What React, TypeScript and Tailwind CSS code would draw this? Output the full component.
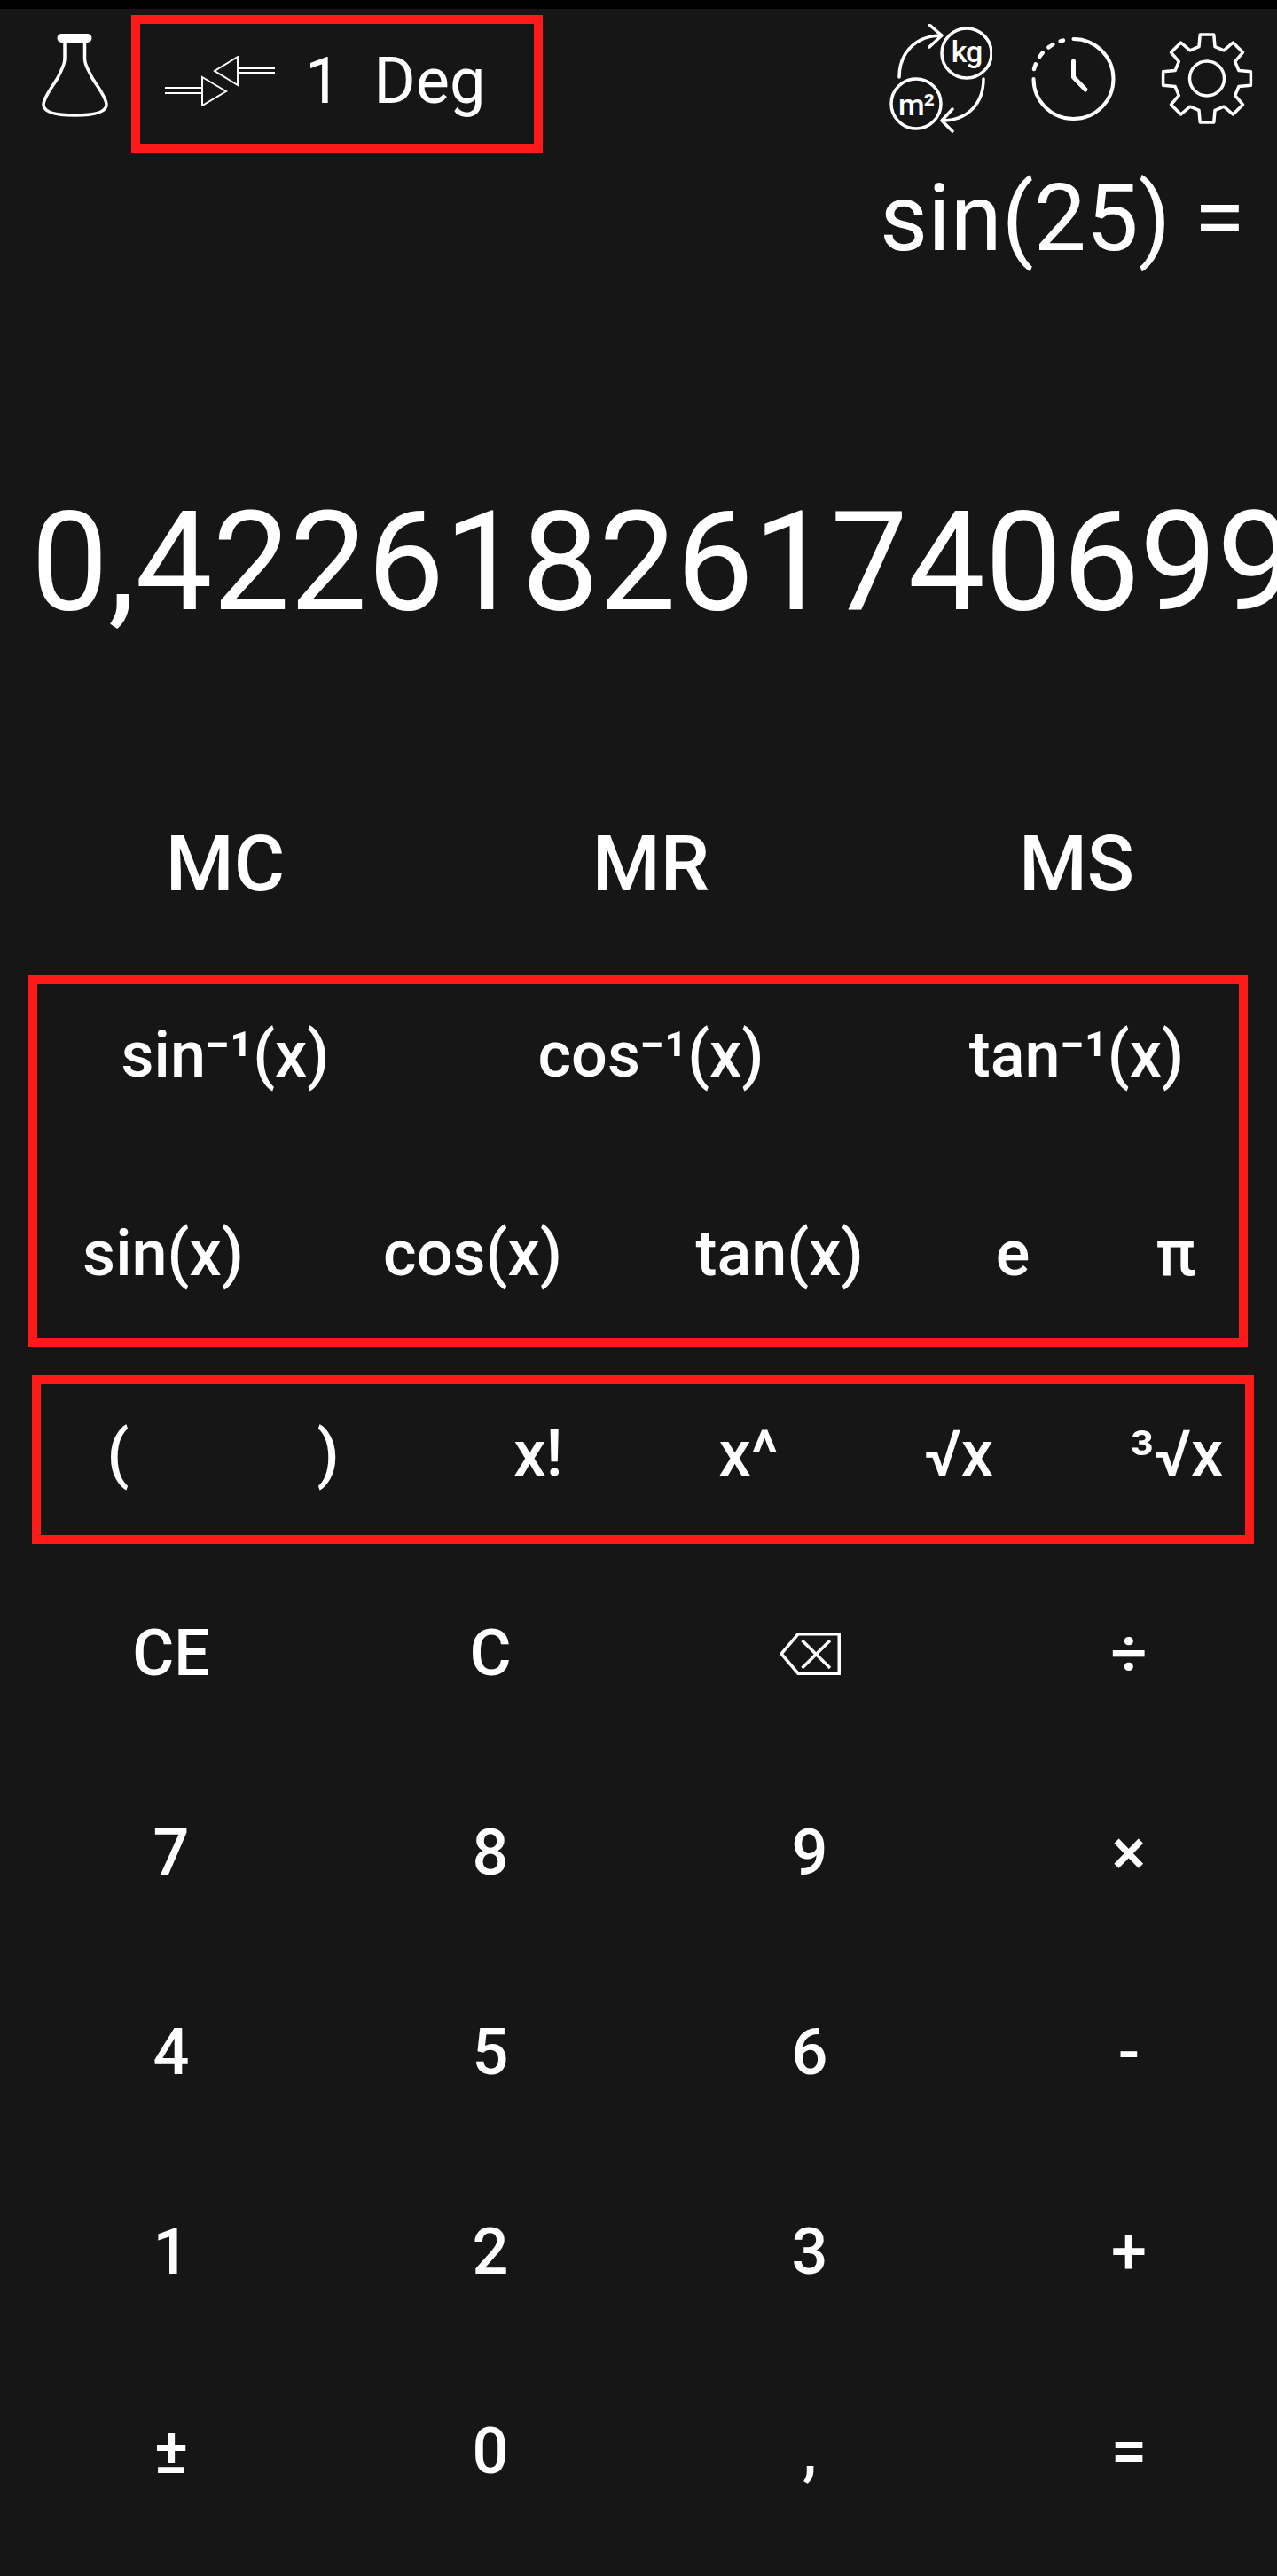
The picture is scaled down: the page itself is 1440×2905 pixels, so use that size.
const ROBOTO = "font-['Roboto',sans-serif]";

function gearPath() {
  const cx = 52;
  const cy = 51.5;
  const pts: string[] = [];
  for (let i = 0; i < 8; i++) {
    const a = (i * 45 - 90) * (Math.PI / 180);
    const offsets: [number, number][] = [
      [37, -14],
      [50, -9],
      [50, 9],
      [37, 14],
    ];
    for (const [r, d] of offsets) {
      const t = a + (d * Math.PI) / 180;
      pts.push(`${(cx + r * Math.cos(t)).toFixed(1)} ${(cy + r * Math.sin(t)).toFixed(1)}`);
    }
  }
  return `M${pts.join(" L")} Z`;
}

function FlaskIcon() {
  return (
    <svg width="75" height="94" viewBox="0 0 75 94" fill="none" stroke="white" strokeWidth="3.5" strokeLinejoin="round">
      <rect x="20" y="2.5" width="34" height="5" rx="2.5" strokeWidth="5" />
      <path d="M26 9 V28 C26 36 22 41 18 50 C12 60 2 72 2 80 C2 90 20 92 37.5 92 C55 92 73 90 73 80 C73 72 63 60 57 50 C53 41 48.5 36 48.5 28 V9" />
    </svg>
  );
}

function ConvertArrows() {
  return (
    <svg width="124" height="57" viewBox="0 0 124 57" fill="none" stroke="white" strokeWidth="2">
      <path d="M0 36 H42 M0 42 H42 M42 24 L69 40 L42 56 Z" />
      <path d="M124 14 H82 M124 19 H82 M82 1 L56 17 L82 33 Z" />
    </svg>
  );
}

function UnitsIcon() {
  return (
    <svg width="116" height="123" viewBox="0 0 116 123" fill="none" stroke="white" strokeWidth="3.5" strokeLinecap="round" strokeLinejoin="round">
      <ellipse cx="87" cy="33" rx="28" ry="28" />
      <ellipse cx="30" cy="90" rx="28" ry="28" />
      <path d="M11 60 C11 32 30 13 59 13 M45 1 L59 13 L45 26" />
      <path d="M106 62 C106 90 88 109 59 109 M71 96 L59 109 L71 121" />
      <text x="87" y="43" textAnchor="middle" fill="white" stroke="none" fontSize="34" fontWeight="500" letterSpacing="-1" fontFamily="Roboto, sans-serif">kg</text>
      <text x="30" y="103" textAnchor="middle" fill="white" stroke="none" fontSize="34" fontWeight="500" letterSpacing="-1" fontFamily="Roboto, sans-serif">m²</text>
    </svg>
  );
}

function ClockIcon() {
  return (
    <svg width="95" height="94" viewBox="0 0 95 94" fill="none" stroke="white" strokeWidth="4" strokeLinecap="round" strokeLinejoin="round">
      <path d="M47.5 2 A45 45 0 1 1 2.5 47" />
      <path d="M3 36 A45 45 0 0 1 36 3.5" strokeDasharray="6 9" strokeWidth="4.5" />
      <path d="M47.5 27 V45 L61 59" strokeWidth="5" />
    </svg>
  );
}

function GearIcon() {
  return (
    <svg width="104" height="103" viewBox="0 0 104 103" fill="none" stroke="white" strokeWidth="3.5" strokeLinejoin="round">
      <path d={gearPath()} />
      <circle cx="52" cy="51.5" r="19.5" />
    </svg>
  );
}

function BackspaceIcon() {
  return (
    <svg width="69" height="48" viewBox="0 0 69 48" fill="none" stroke="white" strokeWidth="3.5">
      <path d="M21 1.75 H67.25 V46.25 H21 L2 24 Z" />
      <path d="M25.5 9 L57 40 M57 9 L25.5 40" />
    </svg>
  );
}

function Key({ children }: { children: React.ReactNode }) {
  return <div className="flex items-center justify-center whitespace-nowrap">{children}</div>;
}

const MEMORY = ["MC", "MR", "MS"];
const INVERSE = ["sin⁻¹(x)", "cos⁻¹(x)", "tan⁻¹(x)"];
const TRIG = ["sin(x)", "cos(x)", "tan(x)", "e", "π"];
const POWERS = ["(", ")", "x!", "x^", "√x", "³√x"];
const KEYPAD: React.ReactNode[] = [
  "CE", "C", <BackspaceIcon key="back" />, "÷",
  "7", "8", "9", "×",
  "4", "5", "6", "-",
  "1", "2", "3", "+",
  "±", "0", ",", "=",
];

export default function App() {
  return (
    <div className={`${ROBOTO} h-[2905px] w-[1440px] overflow-hidden bg-[#161616] text-white`}>
      <div className="h-[10px] bg-black" />

      <div className="flex h-[162px] items-start pt-[7px]">
        <div className="ml-[47px] mt-[21px]">
          <FlaskIcon />
        </div>
        <div className="ml-[26px] flex h-[155px] w-[464px] items-center border-[10px] border-[#ff1a1a] pb-[6px] pl-[28px]">
          <ConvertArrows />
          <span className="ml-[34px] text-[72px] leading-none">1</span>
          <span className="ml-[37px] text-[72px] leading-none">Deg</span>
        </div>
        <div className="ml-[391px] mt-[10px]">
          <UnitsIcon />
        </div>
        <div className="ml-[44px] mt-[25px]">
          <ClockIcon />
        </div>
        <div className="ml-[51px] mt-[20px]">
          <GearIcon />
        </div>
      </div>

      <div className="flex h-[152px] items-center justify-end pb-[3px] pr-[36px] text-[105px] leading-none">sin(25) =</div>

      <div className="flex h-[536px] items-center whitespace-nowrap pl-[35px] pt-[84px] text-[155px] leading-none">
        0,422618261740699
      </div>

      <div className="ml-[14px] grid h-[240px] w-[1440px] grid-cols-3 pb-[12px] text-[88px] font-medium">
        {MEMORY.map((k) => (
          <Key key={k}>{k}</Key>
        ))}
      </div>

      <div className="ml-[32px] h-[419px] w-[1375px] border-[10px] border-[#ff1a1a] text-[72px] font-medium">
        <div className="grid h-[160px] grid-cols-[repeat(3,360px)] gap-x-[120px] pl-[32px] leading-none">
          {INVERSE.map((k) => (
            <Key key={k}>{k}</Key>
          ))}
        </div>
        <div className="mt-[64px] grid h-[160px] grid-cols-[284px_414px_278px_248px_120px] leading-none">
          {TRIG.map((k) => (
            <Key key={k}>{k}</Key>
          ))}
        </div>
      </div>

      <div className="ml-[36px] mt-[32px] grid h-[190px] w-[1378px] grid-cols-[130px_130px_130px_130px_130px_148px] gap-x-[107px] border-[10px] border-[#ff1a1a] pb-[12px] pl-[22px] text-[72px] font-medium leading-none">
        {POWERS.map((k) => (
          <Key key={k}>{k}</Key>
        ))}
      </div>

      <div className="ml-[13px] mt-[11px] grid w-[1440px] grid-cols-4 grid-rows-[repeat(5,225px)] text-[72px] font-medium leading-none">
        {KEYPAD.map((k, i) => (
          <Key key={i}>{k}</Key>
        ))}
      </div>
    </div>
  );
}
